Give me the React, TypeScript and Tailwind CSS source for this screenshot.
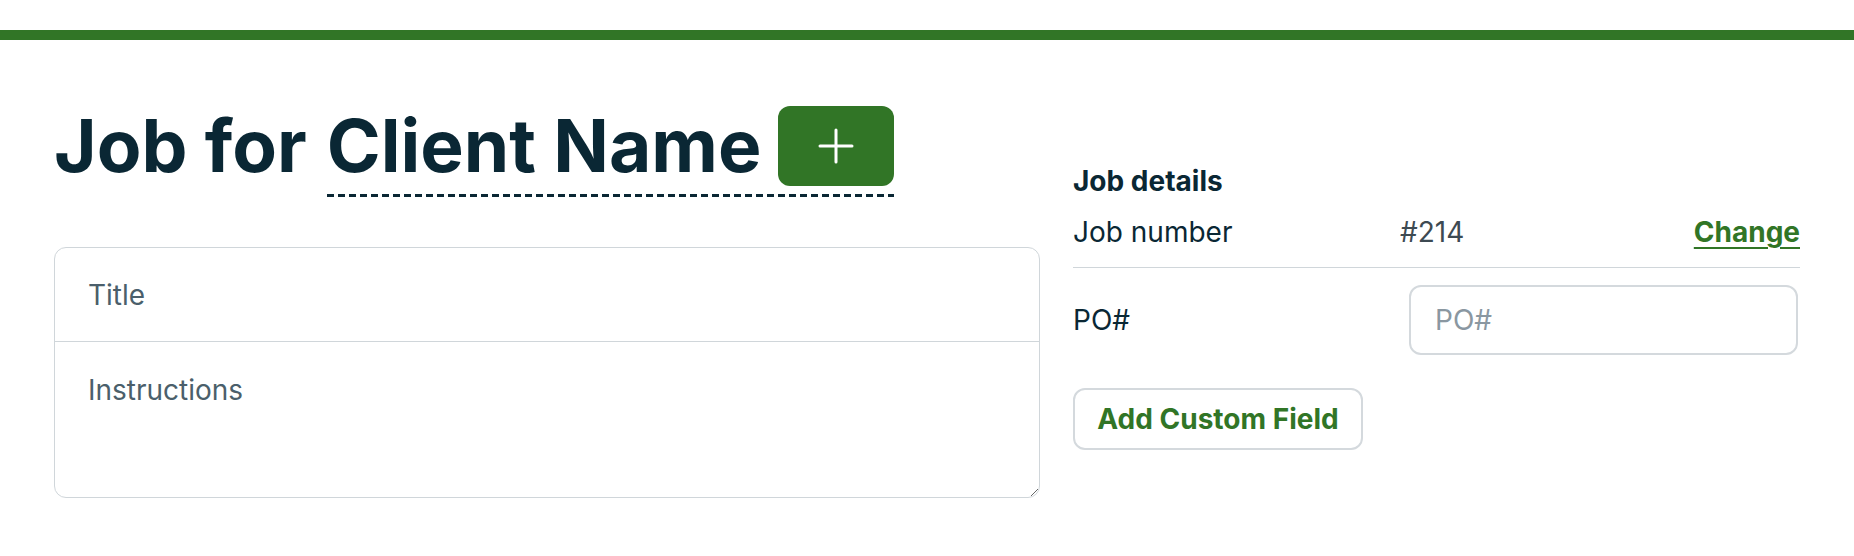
import React from "react";

export default function App() {
  return (
    <div className="min-h-[556px] bg-white font-['Inter',sans-serif] text-[#0a2734]">
      <div className="h-[30px]" />
      <div className="h-[10px] bg-[#317526]" />
      <div className="flex gap-[33px] px-[54px]">
        <div className="flex-1">
          <div className="mt-[66px] flex items-start">
            <span className="text-[73px] font-bold leading-[80px] whitespace-nowrap">
              Job for
            </span>
            <div className="ml-[20px] flex flex-col">
              <div className="flex items-center gap-[17px]">
                <span className="text-[73px] font-bold leading-[80px] whitespace-nowrap">
                  Client Name
                </span>
                <button className="flex h-[80px] w-[116px] items-center justify-center rounded-[12px] bg-[#317526]">
                  <svg width="36" height="36" viewBox="0 0 36 36" fill="none">
                    <path
                      d="M18 2v32M2 18h32"
                      stroke="white"
                      strokeWidth="3"
                      strokeLinecap="round"
                    />
                  </svg>
                </button>
              </div>
              <div className="mt-[8px] h-[3px] bg-[repeating-linear-gradient(to_right,#0a2734_0px,#0a2734_7px,transparent_7px,transparent_11px)]" />
            </div>
          </div>
          <div className="mt-[50px] flex flex-col overflow-hidden rounded-[12px] border border-[#d0d6da]">
            <input
              className="h-[93px] px-[33px] text-[28px] text-[#0a2734] outline-none placeholder:text-[#4b5f6b]"
              placeholder="Title"
            />
            <textarea
              className="h-[156px] border-t border-[#d0d6da] px-[33px] pt-[27px] text-[28px] leading-[42px] text-[#0a2734] outline-none placeholder:text-[#4b5f6b]"
              placeholder="Instructions"
            />
          </div>
        </div>
        <div className="w-[727px] pt-[120px]">
          <div className="text-[28px] font-bold leading-[42px]">Job details</div>
          <div className="flex items-center border-b border-[#d0d6da] pt-[9px] pb-[14px] text-[28px] leading-[42px]">
            <span className="w-[327px]">Job number</span>
            <span className="flex-1 text-[#3d4a52]">#214</span>
            <a className="font-bold text-[#317526] underline decoration-2 underline-offset-[5px]">Change</a>
          </div>
          <div className="flex items-center pt-[17px]">
            <span className="w-[336px] text-[28px]">PO#</span>
            <input
              className="h-[70px] w-[389px] rounded-[12px] border-2 border-[#d4d9dd] px-[24px] text-[28px] outline-none placeholder:text-[#8a97a1]"
              placeholder="PO#"
            />
          </div>
          <button className="mt-[33px] h-[62px] w-[290px] rounded-[12px] border-2 border-[#d4d9dd] text-[28px] font-bold text-[#317526]">
            Add Custom Field
          </button>
        </div>
      </div>
    </div>
  );
}
